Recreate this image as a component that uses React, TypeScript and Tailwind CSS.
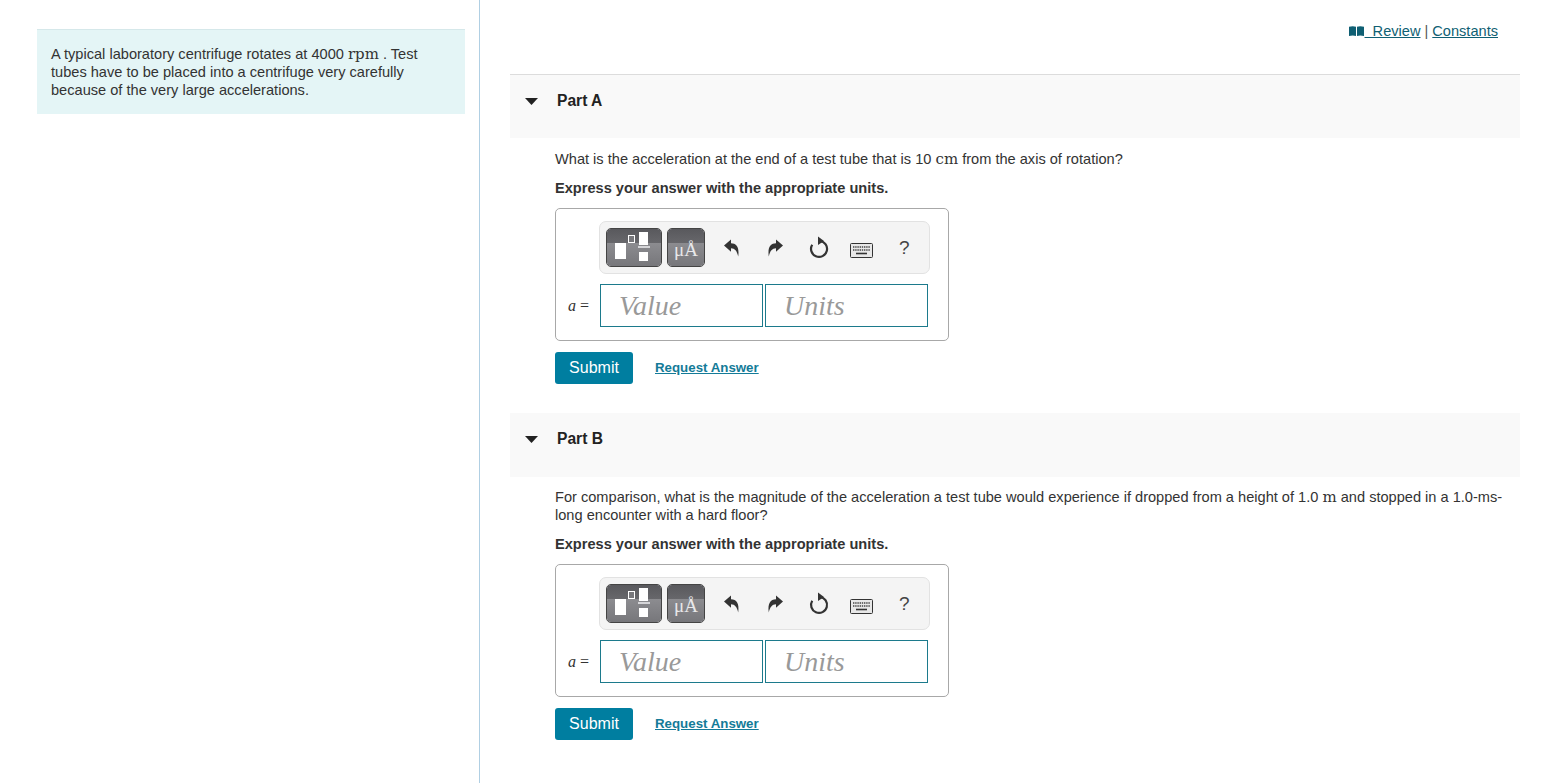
import React from 'react';

const serif = "font-['Liberation_Serif',serif]";
const mathRoman = "font-['DejaVu_Serif',serif] text-[15px] leading-[18px]";

const TemplateButtons = () => (
  <>
    <div className="relative w-[56px] h-[39px] rounded-[5px] border border-[#444] overflow-hidden flex flex-col">
      <div className="h-[14px] bg-gradient-to-b from-[#59595d] to-[#67676b]" />
      <div className="flex-1 bg-gradient-to-b from-[#8c8c90] to-[#77777b]" />
      <svg className="absolute inset-0" width="54" height="37" viewBox="0 0 54 37">
        <rect x="8" y="14" width="11" height="16" fill="#fff" />
        <rect x="21.5" y="6.5" width="6" height="7" fill="#77777b" stroke="#fff" />
        <rect x="32" y="3" width="9" height="13" fill="#fff" />
        <rect x="31" y="17" width="12" height="2" fill="#d5d5d8" />
        <rect x="32" y="23" width="9" height="9" fill="#fff" />
      </svg>
    </div>
    <div className="relative w-[38px] h-[39px] rounded-[5px] border border-[#444] overflow-hidden flex flex-col">
      <div className="h-[14px] bg-gradient-to-b from-[#59595d] to-[#67676b]" />
      <div className="flex-1 bg-gradient-to-b from-[#8c8c90] to-[#77777b]" />
      <span className={`absolute left-[6px] top-[10px] text-[19px] leading-[22px] text-[#e8e8ea] ${serif}`}>μÅ</span>
    </div>
  </>
);

const ToolIcons = () => (
  <>
    <svg className="ml-[18px]" width="18" height="20" viewBox="0 0 18 20">
      <path d="M1 7.5 8 1.5V5.2C13.5 5.4 16.5 9 15.2 18.5 14 13 12 10.4 8 10.2V13.8Z" fill="#333" />
    </svg>
    <svg className="ml-[25px]" width="18" height="20" viewBox="0 0 18 20">
      <path d="M17 7.5 10 1.5V5.2C4.5 5.4 1.5 9 2.8 18.5 4 13 6 10.4 10 10.2V13.8Z" fill="#333" />
    </svg>
    <svg className="ml-[24px] -mt-[2px]" width="22" height="24" viewBox="0 0 22 24">
      <path d="M12 6A8 8 0 1 1 4.2 9.8" fill="none" stroke="#333" strokeWidth="2.2" />
      <path d="M10 1.5 16 6 10 10Z" fill="#333" />
    </svg>
    <svg className="ml-[20px] mt-[5px]" width="23" height="15" viewBox="0 0 23 15">
      <rect x="0.5" y="0.5" width="22" height="14" rx="1" fill="#e8e8e8" stroke="#333" />
      <path d="M3 4h17M3 7h17" stroke="#444" strokeWidth="1.6" strokeDasharray="1.4 0.8" />
      <path d="M6 10.5h11" stroke="#333" strokeWidth="1.6" />
    </svg>
    <span className="ml-[26px] text-[19px] leading-[24px] text-[#444] font-['Liberation_Sans',sans-serif]">?</span>
  </>
);

const AnswerBox = () => (
  <div className="w-[394px] h-[133px] mt-[11px] border border-[#a8a8a8] rounded-[5px] pl-[43px] pt-[12px]">
    <div className="w-[331px] h-[53px] bg-[#f4f4f4] border border-[#e2e2e2] rounded-[7px] flex items-center pl-[6px] gap-[5px]">
      <TemplateButtons />
      <div className="flex items-center -ml-[5px]">
        <ToolIcons />
      </div>
    </div>
    <div className="flex items-center mt-[10px] ml-[1px] relative">
      <span className={`absolute -left-[32px] top-[13px] text-[16px] leading-[18px] text-[#333] ${serif}`}>
        <i>a</i> =
      </span>
      <div className="w-[163px] h-[43px] border border-[#1c7a8c] flex items-center pl-[18px]">
        <span className={`italic text-[28px] text-[#999] ${serif}`}>Value</span>
      </div>
      <div className="w-[163px] h-[43px] ml-[2px] border border-[#1c7a8c] flex items-center pl-[18px]">
        <span className={`italic text-[28px] text-[#999] ${serif}`}>Units</span>
      </div>
    </div>
  </div>
);

const Actions = () => (
  <div className="flex items-center mt-[11px]">
    <button className="w-[78px] h-[32px] bg-[#007ea0] rounded-[3px] text-white text-[16px]">Submit</button>
    <a className="ml-[22px] text-[#147b98] text-[13.3px] font-bold underline">Request Answer</a>
  </div>
);

const PartHeader = ({ title, border }: { title: string; border?: boolean }) => (
  <div className={`h-[64px] bg-[#f9f9f9] flex items-start pl-[15px] ${border ? 'border-t border-[#dcdcdc] pt-[17px]' : 'pt-[17px]'}`}>
    <svg className="mt-[6px]" width="13" height="7" viewBox="0 0 13 7">
      <path d="M0 0h13L6.5 7Z" fill="#222" />
    </svg>
    <span className="ml-[19px] text-[15.6px] leading-[18px] font-bold text-[#222]">{title}</span>
  </div>
);

export default function App() {
  return (
    <div className="flex w-[1548px] h-[783px] overflow-hidden bg-white font-['Liberation_Sans',Arial,sans-serif] text-[14.6px] leading-[18px] text-[#333]">
      <aside className="w-[480px] shrink-0 border-r border-[#b0cfe3] pl-[37px] pt-[29px]">
        <div className="w-[428px] h-[85px] bg-[#e4f5f6] border-t border-[#d5e8ea] pl-[14px] pt-[15px] pr-[40px]">
          <p>
            A typical laboratory centrifuge rotates at 4000 <span className={mathRoman}>rpm</span> . Test tubes have to
            be placed into a centrifuge very carefully because of the very large accelerations.
          </p>
        </div>
      </aside>

      <main className="w-[1010px] ml-[30px]">
        <div className="h-[74px] flex justify-end pr-[22px] pt-[22px] text-[#0f5f73]">
          <div className="flex items-start">
            <svg className="mt-[4px] mr-[1px]" width="15" height="10" viewBox="0 0 15 10">
              <path d="M0 0.8C2.5 0 5 0 7 0.8V10C5 9.2 2.5 9.2 0 10ZM8 0.8C10 0 12.5 0 15 0.8V10C12.5 9.2 10 9.2 8 10Z" fill="#0f5f73" />
            </svg>
            <a className="underline whitespace-pre">  Review</a>
            <span className="mx-[4px] text-[#555]">|</span>
            <a className="underline">Constants</a>
          </div>
        </div>

        <section>
          <PartHeader title="Part A" border />
          <div className="pl-[45px] pt-[12px]">
            <p>
              What is the acceleration at the end of a test tube that is 10 <span className={mathRoman}>cm</span> from
              the axis of rotation?
            </p>
            <p className="mt-[11px] font-bold">Express your answer with the appropriate units.</p>
            <AnswerBox />
            <Actions />
          </div>
        </section>

        <section className="mt-[29px]">
          <PartHeader title="Part B" />
          <div className="pl-[45px] pt-[11px] pr-[14px]">
            <p>
              For comparison, what is the magnitude of the acceleration a test tube would experience if dropped from a
              height of 1.0 <span className={mathRoman}>m</span> and stopped in a 1.0-ms-long encounter with a hard
              floor?
            </p>
            <p className="mt-[11px] font-bold">Express your answer with the appropriate units.</p>
            <AnswerBox />
            <Actions />
          </div>
        </section>
      </main>
    </div>
  );
}
